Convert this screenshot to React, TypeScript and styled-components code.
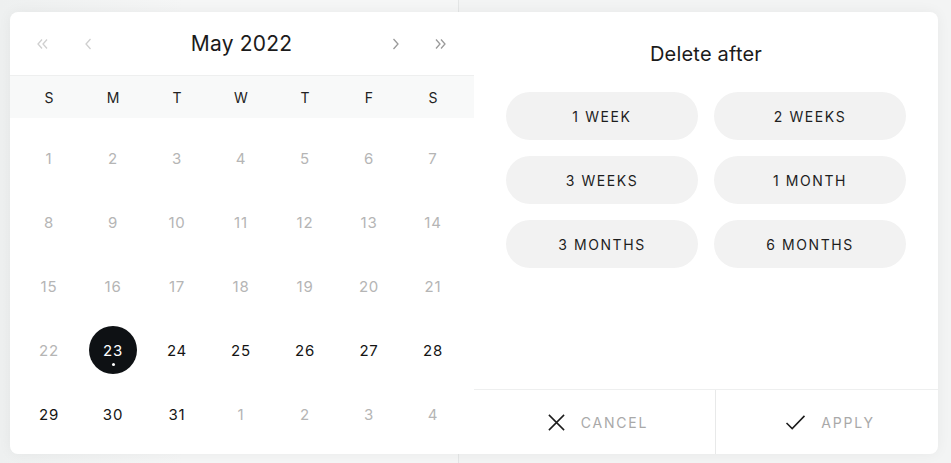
import React from 'react'
import styled, { createGlobalStyle } from 'styled-components'

const GlobalStyle = createGlobalStyle`
  html, body {
    margin: 0;
    padding: 0;
    background: #f3f4f4;
    font-family: 'Inter', 'Liberation Sans', sans-serif;
    -webkit-font-smoothing: antialiased;
  }
`

const Page = styled.div`
  position: relative;
  width: 951px;
  height: 463px;
  overflow: hidden;
  display: flex;
`

const BackPane = styled.div`
  width: 458px;
  height: 100%;
  border-right: 1px solid #e4e6e6;
  background: linear-gradient(90deg, #eef0f0 0%, #f5f6f6 40%);
`

const Card = styled.div`
  position: absolute;
  left: 10px;
  top: 12px;
  width: 928px;
  height: 442px;
  display: flex;
  background: #fff;
  border-radius: 8px;
  box-shadow: 0 0 14px rgba(0, 0, 0, 0.05);
  overflow: hidden;
`

const Calendar = styled.div`
  width: 464px;
  display: flex;
  flex-direction: column;
`

const Header = styled.div`
  height: 63px;
  display: grid;
  grid-template-columns: 44px 49px 1fr 49px 44px;
  align-items: center;
  padding: 0 11px 0 10px;
  border-bottom: 1px solid #eeefef;
`

const NavButton = styled.button<{ $active?: boolean }>`
  border: 0;
  background: none;
  padding: 0;
  display: flex;
  align-items: center;
  justify-content: center;
  color: ${(p) => (p.$active ? '#9a9a9a' : '#cfcfcf')};
  cursor: pointer;
`

const MonthTitle = styled.div`
  text-align: center;
  font-size: 21px;
  color: #1b1b1b;
  letter-spacing: 0.2px;
`

const WeekRow = styled.div`
  height: 42px;
  display: grid;
  grid-template-columns: repeat(7, 64px);
  padding: 0 8px 0 7px;
  background: #f8f9f9;
`

const WeekDay = styled.div`
  display: flex;
  align-items: center;
  justify-content: center;
  font-size: 14px;
  color: #222;
`

const DayGrid = styled.div`
  display: grid;
  grid-template-columns: repeat(7, 64px);
  grid-auto-rows: 64px;
  padding: 8px 8px 8px 7px;
`

const Day = styled.div<{ $muted?: boolean; $selected?: boolean }>`
  position: relative;
  display: flex;
  align-items: center;
  justify-content: center;
  font-size: 15px;
  letter-spacing: 0.8px;
  color: ${(p) => (p.$selected ? '#fff' : p.$muted ? '#b5b5b5' : '#151515')};

  &::before {
    content: '';
    display: ${(p) => (p.$selected ? 'block' : 'none')};
    position: absolute;
    left: 8px;
    top: 8px;
    width: 48px;
    height: 48px;
    border-radius: 50%;
    background: #0e1114;
  }

  &::after {
    content: '';
    display: ${(p) => (p.$selected ? 'block' : 'none')};
    position: absolute;
    left: 31px;
    top: 45px;
    width: 3px;
    height: 3px;
    border-radius: 50%;
    background: #fff;
  }
`

const DayLabel = styled.span`
  position: relative;
  z-index: 1;
`

const Side = styled.div`
  flex: 1;
  display: flex;
  flex-direction: column;
`

const SideBody = styled.div`
  flex: 1;
  padding: 0 32px;
`

const SideTitle = styled.div`
  height: 80px;
  display: flex;
  align-items: center;
  justify-content: center;
  padding-top: 3px;
  box-sizing: border-box;
  font-size: 20px;
  color: #1b1b1b;
  letter-spacing: 0.2px;
`

const Options = styled.div`
  display: grid;
  grid-template-columns: repeat(2, 192px);
  grid-auto-rows: 48px;
  gap: 16px;
`

const Option = styled.button`
  border: 0;
  margin: 0;
  padding: 0;
  border-radius: 24px;
  background: #f2f2f2;
  font-family: inherit;
  font-size: 14px;
  letter-spacing: 1.6px;
  color: #1e1e1e;
  cursor: pointer;
`

const Footer = styled.div`
  height: 64px;
  display: flex;
  border-top: 1px solid #eeefef;
`

const FooterButton = styled.button<{ $width?: number }>`
  ${(p) => (p.$width ? `flex: 0 0 ${p.$width}px;` : 'flex: 1;')}
  display: flex;
  align-items: center;
  justify-content: center;
  gap: 15px;
  padding: 0 0 0 6px;
  border: 0;
  background: none;
  font-family: inherit;
  font-size: 14px;
  letter-spacing: 1.8px;
  color: #a9a9a9;
  cursor: pointer;

  & + & {
    border-left: 1px solid #e8e9e9;
  }
`

const Chevron = ({ dir, double }: { dir: 'left' | 'right'; double?: boolean }) => {
  const single = dir === 'left' ? 'M9.5 3 5 8l4.5 5' : 'M6.5 3 11 8l-4.5 5'
  const pair =
    dir === 'left'
      ? 'M8 3.5 4 8l4 4.5M13 3.5 9 8l4 4.5'
      : 'M3 3.5 7 8l-4 4.5M8 3.5 12 8l-4 4.5'
  return (
    <svg width="16" height="16" viewBox="0 0 16 16" fill="none" stroke="currentColor" strokeWidth="1.3">
      <path d={double ? pair : single} />
    </svg>
  )
}

const CloseIcon = () => (
  <svg width="19" height="19" viewBox="0 0 20 20" fill="none" stroke="#1c1c1c" strokeWidth="1.6">
    <path d="M2 2 18 18M18 2 2 18" />
  </svg>
)

const CheckIcon = () => (
  <svg width="21" height="17" viewBox="0 0 22 18" fill="none" stroke="#1c1c1c" strokeWidth="1.6">
    <path d="M1.5 9.5 7.5 15.5 20.5 2" />
  </svg>
)

const weekDays = ['S', 'M', 'T', 'W', 'T', 'F', 'S']

const days = [
  ...Array.from({ length: 31 }, (_, i) => ({ n: i + 1, muted: i + 1 < 23 })),
  ...[1, 2, 3, 4].map((n) => ({ n, muted: true }))
]

const options = ['1 WEEK', '2 WEEKS', '3 WEEKS', '1 MONTH', '3 MONTHS', '6 MONTHS']

export default function App() {
  return (
    <>
      <GlobalStyle />
      <Page>
        <BackPane />
        <Card>
          <Calendar>
            <Header>
              <NavButton>
                <Chevron dir="left" double />
              </NavButton>
              <NavButton>
                <Chevron dir="left" />
              </NavButton>
              <MonthTitle>May 2022</MonthTitle>
              <NavButton $active>
                <Chevron dir="right" />
              </NavButton>
              <NavButton $active>
                <Chevron dir="right" double />
              </NavButton>
            </Header>
            <WeekRow>
              {weekDays.map((d, i) => (
                <WeekDay key={i}>{d}</WeekDay>
              ))}
            </WeekRow>
            <DayGrid>
              {days.map((d, i) => (
                <Day key={i} $muted={d.muted} $selected={i === 22}>
                  <DayLabel>{d.n}</DayLabel>
                </Day>
              ))}
            </DayGrid>
          </Calendar>
          <Side>
            <SideBody>
              <SideTitle>Delete after</SideTitle>
              <Options>
                {options.map((o) => (
                  <Option key={o}>{o}</Option>
                ))}
              </Options>
            </SideBody>
            <Footer>
              <FooterButton $width={241}>
                <CloseIcon />
                CANCEL
              </FooterButton>
              <FooterButton>
                <CheckIcon />
                APPLY
              </FooterButton>
            </Footer>
          </Side>
        </Card>
      </Page>
    </>
  )
}
